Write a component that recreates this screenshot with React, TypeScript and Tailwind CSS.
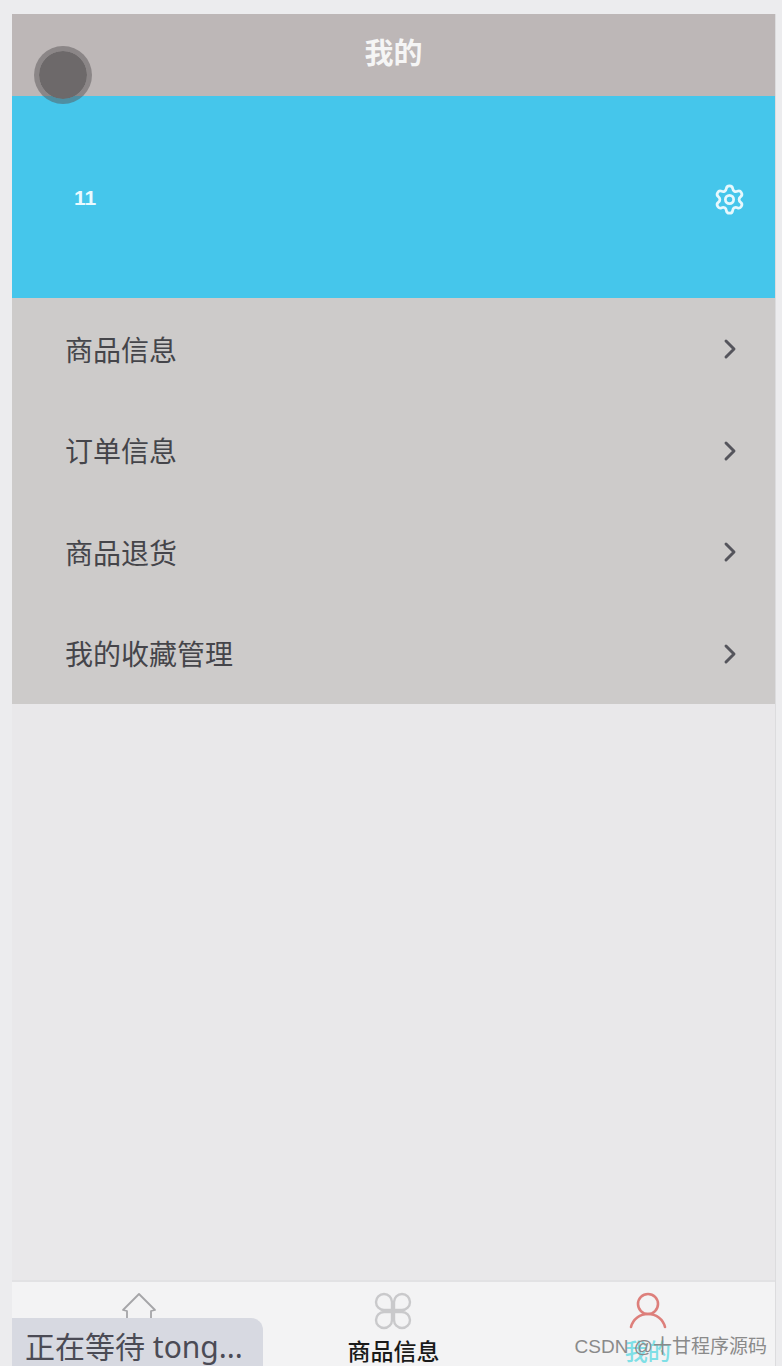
import React from "react";
import { ChevronRight, Settings } from "lucide-react";

const menuItems = ["商品信息", "订单信息", "商品退货", "我的收藏管理"];

function HomeIcon() {
  return (
    <svg width="38" height="38" viewBox="0 0 38 38" fill="none" stroke="#a5a5a8" strokeWidth="1.8">
      <path d="M3 18 L19 2 L35 18 L31 19 V34 H7 V19 Z" strokeLinejoin="round" />
      <path d="M15 34 V27 H24 V34" />
    </svg>
  );
}

function GridIcon() {
  return (
    <svg width="38" height="38" viewBox="0 0 38 38" fill="none" stroke="#c9c9cb" strokeWidth="2.4">
      <path d="M18 18 H10 A8 8 0 1 1 18 10 Z" />
      <path d="M20 18 H28 A8 8 0 1 0 20 10 Z" />
      <path d="M18 20 H10 A8 8 0 1 0 18 28 Z" />
      <path d="M20 20 H28 A8 8 0 1 1 20 28 Z" />
    </svg>
  );
}

function PersonIcon() {
  return (
    <svg width="38" height="38" viewBox="0 0 38 38" fill="none" stroke="#dd7f7b" strokeWidth="2.6" strokeLinecap="round">
      <circle cx="19" cy="12" r="10" />
      <path d="M2 35 C4 27 11 22 19 22 C27 22 34 27 36 35" />
    </svg>
  );
}

export default function App() {
  return (
    <div className="relative h-[1366px] w-[782px] overflow-hidden bg-[#ececee] pt-[14px] pl-3 pr-[6px] font-['Liberation_Sans','Noto_Sans_CJK_SC',sans-serif]">
      <div className="flex h-full flex-col border-r border-[#dcdcde]">
        <header className="flex h-[82px] items-center justify-center bg-[#bdb7b7] text-[29px] font-bold text-[#f5f5f5]">
          我的
        </header>

        <section className="flex h-[202px] items-center justify-between bg-[#45c6eb] pl-[62px] pr-[29px] text-white">
          <span className="mt-[2px] text-[21px] font-bold text-[#eafaff]">11</span>
          <Settings size={33} strokeWidth={2} className="mt-[4px] text-[#e6f8fd]" />
        </section>

        <ul className="flex h-[406px] flex-col bg-[#cdcbca]">
          {menuItems.map((item) => (
            <li key={item} className="flex flex-1 items-center justify-between pl-[53px] pr-[29px]">
              <span className="mt-[6px] text-[28px] leading-none text-[#45454a]">{item}</span>
              <ChevronRight size={32} strokeWidth={2.2} className="mt-[1px] text-[#55555c]" />
            </li>
          ))}
        </ul>

        <main className="flex-1 bg-[#e9e8ea]" />

        <nav className="grid h-[86px] grid-cols-3 border-t-2 border-[#e2e2e4] bg-[#f3f3f4]">
          <div className="flex flex-col items-center pt-[10px]">
            <HomeIcon />
          </div>
          <div className="flex flex-col items-center pt-[10px]">
            <GridIcon />
            <span className="mt-[7px] text-[23px] font-medium leading-[30px] text-[#1a1a1a]">商品信息</span>
          </div>
          <div className="flex flex-col items-center pt-[10px]">
            <PersonIcon />
            <span className="mt-[7px] text-[23px] font-medium leading-[30px] text-[#7fdfe6]">我的</span>
          </div>
        </nav>
      </div>

      {/* floating button */}
      <div className="absolute left-[34px] top-[46px] h-[58px] w-[58px] rounded-full border-[5px] border-[#5a5657]/50 bg-[#6d696a] bg-clip-padding blur-[0.5px]" />

      {/* browser status bubble */}
      <div className="absolute bottom-0 left-3 flex h-[48px] w-[251px] items-center rounded-tr-xl bg-[#d7d9e1] pl-[13px] pt-[10px] font-['Noto_Sans','Noto_Sans_CJK_SC',sans-serif] text-[30px] leading-none text-[#4b4b55]">
        正在等待 tong...
      </div>

      {/* watermark */}
      <div className="absolute bottom-[4px] right-[15px] text-[19px] leading-[30px] text-[#8a8a8a]">CSDN @十甘程序源码</div>
    </div>
  );
}
